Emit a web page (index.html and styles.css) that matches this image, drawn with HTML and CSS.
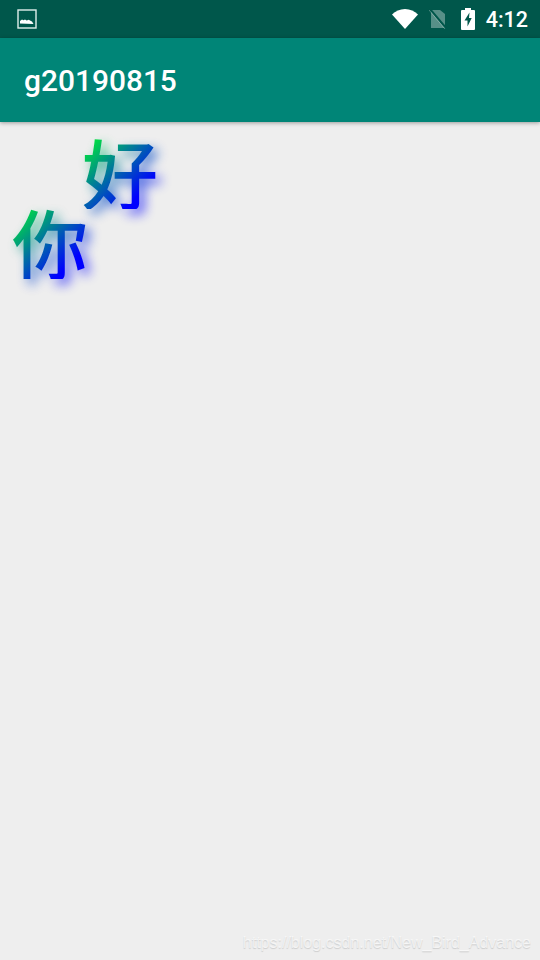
FILE: index.html
```html
<!DOCTYPE html>
<html>
  <head>
    <meta charset="utf-8">
    <link rel="stylesheet" href="styles.css">
  </head>
  <body>
    <div class="status-bar">
      <svg class="icon-picture" width="20" height="20" viewBox="0 0 20 20">
        <rect x="1" y="1" width="18" height="18" fill="none" stroke="#dfeeeb" stroke-width="1.4"/>
        <path d="M3 14.500v-2.500l2-1.500 1.500.8 1.500-.8 1.700 1 2-.8 1.800 1 1.500.8 1.500 2.500z" fill="#fff"/>
      </svg>
      <div class="status-right">
        <svg class="icon-wifi" width="26" height="20" viewBox="0 0 26 20">
          <path d="M0 5.600C3.400 2.200 8 0 13 0s9.600 2.200 13 5.600L13 20z" fill="#fff"/>
        </svg>
        <svg class="icon-sim" width="18" height="20" viewBox="0 0 18 20">
          <path d="M2 1h9l5 4v14H2z" fill="#fff" fill-opacity=".34"/>
          <path d="M1 0l16 19" stroke="#00574b" stroke-width="2"/>
          <path d="M0 1l16 19" stroke="#fff" stroke-opacity=".3" stroke-width="1"/>
        </svg>
        <svg class="icon-battery" width="14" height="22" viewBox="0 0 14 22">
          <path d="M4 0h6v2h3a1 1 0 0 1 1 1v18a1 1 0 0 1-1 1H1a1 1 0 0 1-1-1V3a1 1 0 0 1 1-1h3z" fill="#fff"/>
          <path d="M8.500 4.500L3.500 12.500h3v6l4.200-8.500H8z" fill="#00574b"/>
        </svg>
        <span class="clock">4:12</span>
      </div>
    </div>
    <div class="toolbar">
      <h1>g20190815</h1>
    </div>
    <div class="content">
      <span class="glyph glyph-hao" data-text="好">好</span>
      <span class="glyph glyph-ni" data-text="你">你</span>
      <span class="watermark">https://blog.csdn.net/New_Bird_Advance</span>
    </div>
  </body>
</html>
```
FILE: styles.css
```css
html, body {
  margin: 0;
  height: 100%;
}
body {
  display: flex;
  flex-direction: column;
  height: 960px;
  overflow: hidden;
  background: #eeeeee;
  font-family: Roboto, sans-serif;
}

.status-bar {
  display: flex;
  align-items: center;
  justify-content: space-between;
  height: 38px;
  padding: 0 12px 0 17px;
  background: #00574b;
  flex: none;
}
.status-right {
  display: flex;
  align-items: center;
}
.icon-wifi {
  margin-right: 11px;
}
.icon-sim {
  margin-right: 14px;
}
.icon-battery {
  margin-right: 11px;
}
.clock {
  color: #fff;
  font-size: 21.500px;
  font-weight: 500;
}

.toolbar {
  display: flex;
  align-items: center;
  position: relative;
  height: 84px;
  padding-left: 24px;
  background: #008577;
  box-shadow: 0 1px 4px rgba(0, 0, 0, .35);
  flex: none;
}
h1 {
  margin: 0;
  color: #fff;
  font-size: 29.900px;
  font-weight: 500;
}

.content {
  position: relative;
  flex: 1;
}
.glyph {
  position: absolute;
  width: 76px;
  height: 76px;
  font-family: "Noto Sans CJK SC", sans-serif;
  font-size: 76px;
  font-weight: 500;
  line-height: 76px;
  background: linear-gradient(135deg, #00e040 12%, #0060b0 50%, #0000ff 78%);
  -webkit-background-clip: text;
  background-clip: text;
  color: transparent;
}
.glyph::before {
  content: attr(data-text);
  position: absolute;
  left: 5px;
  top: 5px;
  z-index: -1;
  background: linear-gradient(135deg, #00d050 12%, #0050c0 50%, #0000ff 78%);
  -webkit-background-clip: text;
  background-clip: text;
  filter: blur(6px);
  opacity: .7;
}
.glyph-hao {
  left: 82px;
  top: 11px;
}
.glyph-ni {
  left: 12px;
  top: 81px;
}

.watermark {
  position: absolute;
  right: 9px;
  bottom: 8px;
  color: rgba(255, 255, 255, .65);
  font-family: "Liberation Sans", sans-serif;
  font-size: 16px;
  text-shadow: 0 1px 1px rgba(0, 0, 0, .14);
}
```
